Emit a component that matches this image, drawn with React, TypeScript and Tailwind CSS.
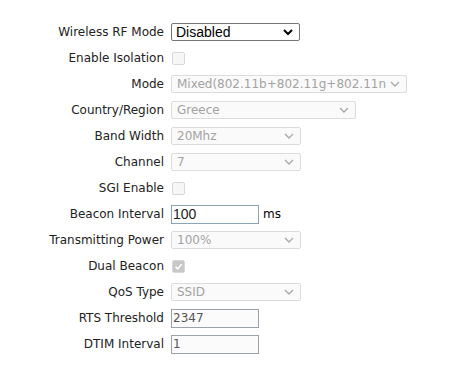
import React from "react";

const Chevron = ({ enabled }: { enabled?: boolean }) => (
  <svg
    className="pointer-events-none absolute right-[7px] top-1/2 -translate-y-1/2"
    width="10"
    height="7"
    viewBox="0 0 10 7"
  >
    <path
      d="M1 1.5 L5 5.5 L9 1.5"
      fill="none"
      stroke={enabled ? "#000" : "#a8a8a8"}
      strokeWidth={enabled ? 2 : 1.3}
    />
  </svg>
);

const Select = ({
  value,
  width,
  enabled,
}: {
  value: string;
  width: string;
  enabled?: boolean;
}) => (
  <div className={`relative h-[18px] ${width}`}>
    <div
      className={
        enabled
          ? "flex h-full w-full items-center overflow-hidden whitespace-nowrap rounded-[2px] border border-[#767676] bg-white pl-[4px] pr-[18px] text-[14px] leading-none text-black"
          : "flex h-full w-full items-center overflow-hidden whitespace-nowrap rounded-[2px] border border-[#dcdcdc] bg-[#fafafa] pl-[5px] pr-[18px] text-[12px] leading-none text-[#a3a3a3]"
      }
      style={{
        fontFamily: enabled
          ? "'Liberation Sans', Arial, sans-serif"
          : "'DejaVu Sans', Verdana, sans-serif",
      }}
    >
      {value}
    </div>
    <Chevron enabled={enabled} />
  </div>
);

const Check = ({ checked }: { checked?: boolean }) => (
  <div className="ml-[1px] flex h-[13px] w-[13px] items-center justify-center rounded-[2px] border border-[#d8d8d8] bg-[#f6f6f6]">
    {checked && (
      <svg width="11" height="11" viewBox="0 0 11 11">
        <rect x="0" y="0" width="11" height="11" fill="#c8c8c8" />
        <path d="M2.5 5.8 L4.6 7.9 L8.6 3.2" fill="none" stroke="#fff" strokeWidth="1.6" />
      </svg>
    )}
  </div>
);

const TextInput = ({ value, focus }: { value: string; focus?: boolean }) => (
  <div
    className={
      focus
        ? "flex h-[19px] w-[88px] items-center border border-[#8ea3b6] bg-white pl-[1px] text-[14px] text-[#222]"
        : "flex h-[19px] w-[88px] items-center border border-[#9aa3ab] bg-[#fbfbfb] pl-[1px] text-[12px] text-[#555]"
    }
    style={{
      fontFamily: focus
        ? "'Liberation Sans', Arial, sans-serif"
        : "'DejaVu Sans', Verdana, sans-serif",
    }}
  >
    {value}
  </div>
);

const rows: { label: string; control: React.ReactNode }[] = [
  { label: "Wireless RF Mode", control: <Select value="Disabled" width="w-[129px]" enabled /> },
  { label: "Enable Isolation", control: <Check /> },
  { label: "Mode", control: <Select value="Mixed(802.11b+802.11g+802.11n" width="w-[236px]" /> },
  { label: "Country/Region", control: <Select value="Greece" width="w-[185px]" /> },
  { label: "Band Width", control: <Select value="20Mhz" width="w-[130px]" /> },
  { label: "Channel", control: <Select value="7" width="w-[130px]" /> },
  { label: "SGI Enable", control: <Check /> },
  {
    label: "Beacon Interval",
    control: (
      <div className="flex items-center gap-[4px]">
        <TextInput value="100" focus />
        <span className="text-[12px] text-black" style={{ fontFamily: "'DejaVu Sans', Verdana, sans-serif" }}>
          ms
        </span>
      </div>
    ),
  },
  { label: "Transmitting Power", control: <Select value="100%" width="w-[130px]" /> },
  { label: "Dual Beacon", control: <Check checked /> },
  { label: "QoS Type", control: <Select value="SSID" width="w-[130px]" /> },
  { label: "RTS Threshold", control: <TextInput value="2347" /> },
  { label: "DTIM Interval", control: <TextInput value="1" /> },
];

export default function App() {
  return (
    <div className="h-[387px] w-[469px] bg-white pt-[19px]">
      <div className="grid grid-cols-[164px_auto] gap-x-[7px]">
        {rows.map((r) => (
          <React.Fragment key={r.label}>
            <div
              className="flex h-[26px] items-center justify-end whitespace-nowrap text-[12px] text-[#222]"
              style={{ fontFamily: "'DejaVu Sans', Verdana, sans-serif" }}
            >
              {r.label}
            </div>
            <div className="flex h-[26px] items-center">{r.control}</div>
          </React.Fragment>
        ))}
      </div>
    </div>
  );
}
